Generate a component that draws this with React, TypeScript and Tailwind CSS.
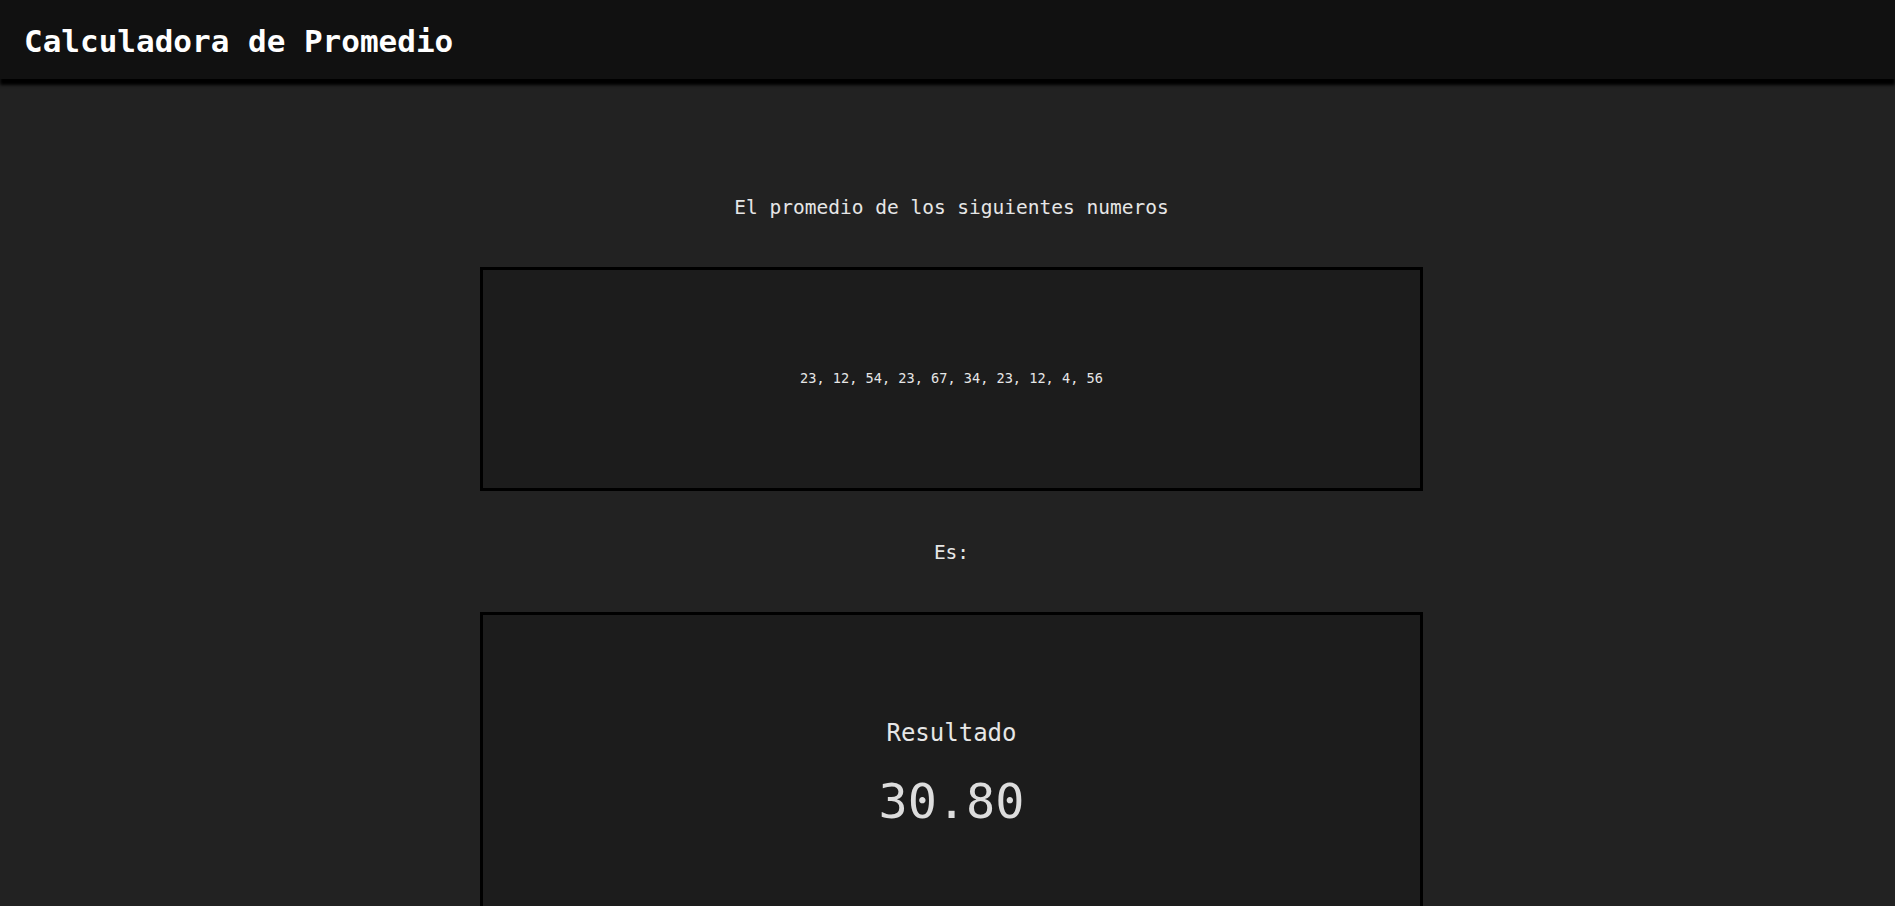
import React from "react";

const numbers = [23, 12, 54, 23, 67, 34, 23, 12, 4, 56];

const App: React.FC = () => {
  const avg = numbers.reduce((a, b) => a + b, 0) / numbers.length;

  return (
    <div className="min-h-screen bg-[#222222] text-[#e6e6e6] font-['DejaVu_Sans_Mono',monospace]">
      <header className="h-[79px] bg-[#111111] flex items-center px-6 shadow-[0_6px_3px_#000]">
        <h1 className="text-[31px] font-bold text-white leading-none mt-1">Calculadora de Promedio</h1>
      </header>

      <main className="flex flex-col items-center pl-2 pt-[119px]">
        <p className="text-[19.5px] leading-none">El promedio de los siguientes numeros</p>

        <div className="mt-[49px] w-[943px] h-[224px] border-[3px] border-black bg-[#1c1c1c] flex items-center justify-center">
          <span className="text-[13.6px]">{numbers.join(", ")}</span>
        </div>

        <p className="mt-[52px] text-[19.5px] leading-none">Es:</p>

        <div className="mt-[50px] w-[943px] h-[320px] border-[3px] border-black bg-[#1c1c1c] flex flex-col items-center pt-[106px]">
          <span className="text-[24px] leading-none">Resultado</span>
          <span className="mt-[32px] text-[48.5px] leading-none text-[#dddddd]">{avg.toFixed(2)}</span>
        </div>
      </main>
    </div>
  );
};

export default App;
